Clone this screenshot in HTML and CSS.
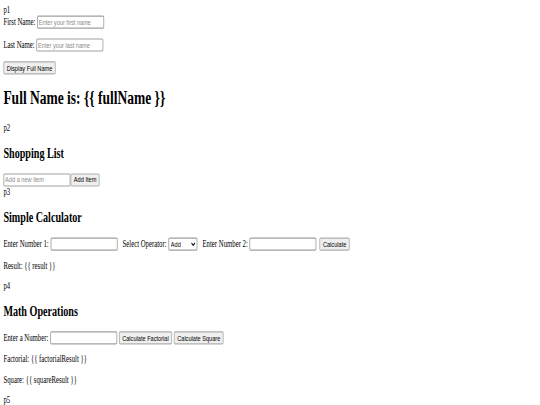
FILE: index.html
```html
<!DOCTYPE html>
<html lang="en">
<head>
<meta charset="utf-8">
<title>Angular Demo</title>
<link rel="stylesheet" href="styles.css">
</head>
<body>
<div class="page">
  <div class="line">p1</div>
  <div class="line">First Name: <input type="text" class="field" placeholder="Enter your first name"></div>
  <p class="line">Last Name: <input type="text" class="field" placeholder="Enter your last name"></p>
  <p class="line"><button class="btn">Display Full Name</button></p>
  <h1 class="title">Full Name is: {{ fullName }}</h1>
  <p class="line">p2</p>
  <h2 class="heading">Shopping List</h2>
  <div class="line"><input type="text" class="field" placeholder="Add a new item"><button class="btn">Add Item</button></div>
  <div class="line">p3</div>
  <h2 class="heading">Simple Calculator</h2>
  <div class="line">
    <label class="lbl">Enter Number 1: <input type="number" class="field"></label>
    <label class="lbl">Select Operator: <select class="sel"><option>Add</option><option>Subtract</option><option>Multiply</option><option>Divide</option></select></label>
    <label class="lbl lbl-last">Enter Number 2: <input type="number" class="field"></label>
    <button class="btn">Calculate</button>
  </div>
  <p class="line">Result: {{ result }}</p>
  <p class="line">p4</p>
  <h2 class="heading">Math Operations</h2>
  <div class="line">Enter a Number: <input type="number" class="field"> <button class="btn">Calculate Factorial</button> <button class="btn">Calculate Square</button></div>
  <p class="line">Factorial: {{ factorialResult }}</p>
  <p class="line">Square: {{ squareResult }}</p>
  <p class="line">p5</p>
</div>
</body>
</html>
```
FILE: styles.css
```css
html, body {
  margin: 0;
  padding: 0;
  width: 540px;
  height: 405px;
  overflow: hidden;
  background: #ffffff;
}
.page {
  width: 1262px;
  padding: 8px;
  font-family: "Liberation Serif", "Times New Roman", serif;
  font-size: 16px;
  color: #000;
  transform: scale(0.421875, 0.6);
  transform-origin: 0 0;
}
.title {
  font-size: 32px;
  font-weight: bold;
  margin: 21.44px 0;
}
.heading {
  font-size: 24px;
  font-weight: bold;
  margin: 19.92px 0;
}
.field {
  font-family: "Liberation Sans", Arial, sans-serif;
  font-size: 13.333px;
  width: 151px;
  height: 16px;
  padding: 1px 2px;
  border: 2px solid #a0a0a0;
  border-radius: 3px;
  box-sizing: content-box;
  background: #fff;
}
.field::placeholder {
  color: #8a8a8a;
}
.sel {
  font-family: "Liberation Sans", Arial, sans-serif;
  font-size: 13.333px;
  width: 69px;
  height: 22px;
  border: 2px solid #a0a0a0;
  border-radius: 3px;
  background: #fff;
  color: #000;
}
.btn {
  font-family: "Liberation Sans", Arial, sans-serif;
  font-size: 13.333px;
  height: 22px;
  padding: 1px 6px;
  border: 2px solid #b0b0b0;
  border-radius: 3px;
  background: #efefef;
  color: #000;
}
.lbl {
  margin-right: 8px;
}
.lbl-last {
  margin-right: 3px;
}
```
